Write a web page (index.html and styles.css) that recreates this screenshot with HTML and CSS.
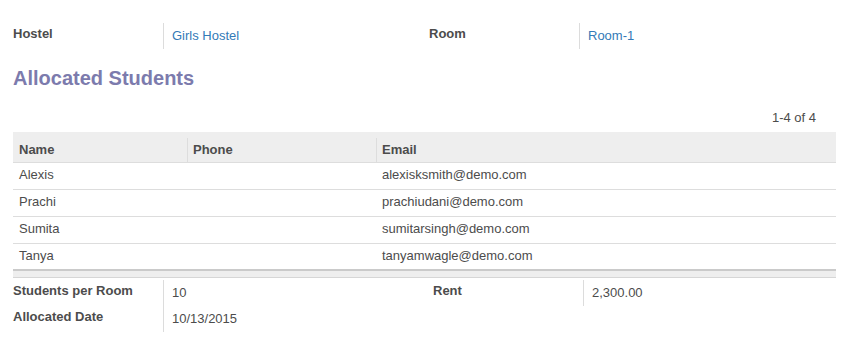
FILE: index.html
```html
<!DOCTYPE html>
<html lang="en">
<head>
    <meta charset="UTF-8">
    <meta name="viewport" content="width=device-width, initial-scale=1.0">
    <title>Room - Girls Hostel</title>
    <link rel="stylesheet" href="styles.css">
</head>
<body>
    <div class="sheet">
        <div class="group-row top-groups">
            <div class="group">
                <div class="field-label">Hostel</div>
                <div class="field-value"><a href="#">Girls Hostel</a></div>
            </div>
            <div class="group">
                <div class="field-label">Room</div>
                <div class="field-value"><a href="#">Room-1</a></div>
            </div>
        </div>

        <h2 class="section-title">Allocated Students</h2>
        <div class="pager">1-4 of 4</div>

        <table class="list">
            <colgroup>
                <col class="col-name">
                <col class="col-phone">
                <col>
            </colgroup>
            <thead>
                <tr>
                    <th>Name</th>
                    <th>Phone</th>
                    <th>Email</th>
                </tr>
            </thead>
            <tbody>
                <tr>
                    <td>Alexis</td>
                    <td></td>
                    <td>alexisksmith@demo.com</td>
                </tr>
                <tr>
                    <td>Prachi</td>
                    <td></td>
                    <td>prachiudani@demo.com</td>
                </tr>
                <tr>
                    <td>Sumita</td>
                    <td></td>
                    <td>sumitarsingh@demo.com</td>
                </tr>
                <tr>
                    <td>Tanya</td>
                    <td></td>
                    <td>tanyamwagle@demo.com</td>
                </tr>
            </tbody>
            <tfoot>
                <tr>
                    <td></td>
                    <td></td>
                    <td></td>
                </tr>
            </tfoot>
        </table>

        <div class="group-row bottom-groups">
            <div class="group">
                <div class="field-label">Students per Room</div>
                <div class="field-value">10</div>
                <div class="field-label">Allocated Date</div>
                <div class="field-value">10/13/2015</div>
            </div>
            <div class="group">
                <div class="field-label">Rent</div>
                <div class="field-value">2,300.00</div>
            </div>
        </div>
    </div>
</body>
</html>
```

FILE: styles.css
```css
body {
    font-family: 'Liberation Sans', Arial, sans-serif;
    font-size: 13px;
    line-height: 18px;
    color: #4c4c4c;
    background-color: #ffffff;
    margin: 0;
    padding: 0;
}
.sheet {
    padding: 23px 17px 0 13px;
}
.group-row {
    display: grid;
}
.top-groups {
    grid-template-columns: 416px 1fr;
}
.bottom-groups {
    grid-template-columns: 420px 1fr;
    margin-top: 2px;
}
.group {
    display: grid;
    grid-template-columns: 150px 1fr;
    grid-auto-rows: 26px;
    align-content: start;
}
.field-label {
    font-weight: bold;
    padding-top: 2px;
}
.field-value {
    border-left: 1px solid #dcdcdc;
    padding: 4px 0 0 8px;
}
.field-value a {
    color: #337ab7;
    text-decoration: none;
}
.section-title {
    color: #7c7bad;
    font-size: 20px;
    line-height: 24px;
    font-weight: bold;
    margin: 17px 0 0;
}
.pager {
    text-align: right;
    padding-right: 20px;
    margin: 19px 0 5px;
}
.list {
    width: 100%;
    border-collapse: collapse;
    table-layout: fixed;
}
.col-name {
    width: 174px;
}
.col-phone {
    width: 189px;
}
.list th {
    background-color: #eeeeee;
    text-align: left;
    font-weight: bold;
    padding: 9px 6px 3px;
    border-bottom: 1px solid #dddddd;
}
.list th + th {
    background: linear-gradient(#dddddd, #dddddd) 0 6px / 1px 100% no-repeat, #eeeeee;
}
.list td {
    padding: 3px 6px 5px;
    border-bottom: 1px solid #dddddd;
}
.list tbody tr:last-child td {
    border-bottom: none;
    padding-bottom: 4px;
}
.list tfoot td {
    background-color: #eeeeee;
    border-top: 2px solid #cacaca;
    border-bottom: 1px solid #d6d6d6;
    height: 6px;
    padding: 0;
}
```
